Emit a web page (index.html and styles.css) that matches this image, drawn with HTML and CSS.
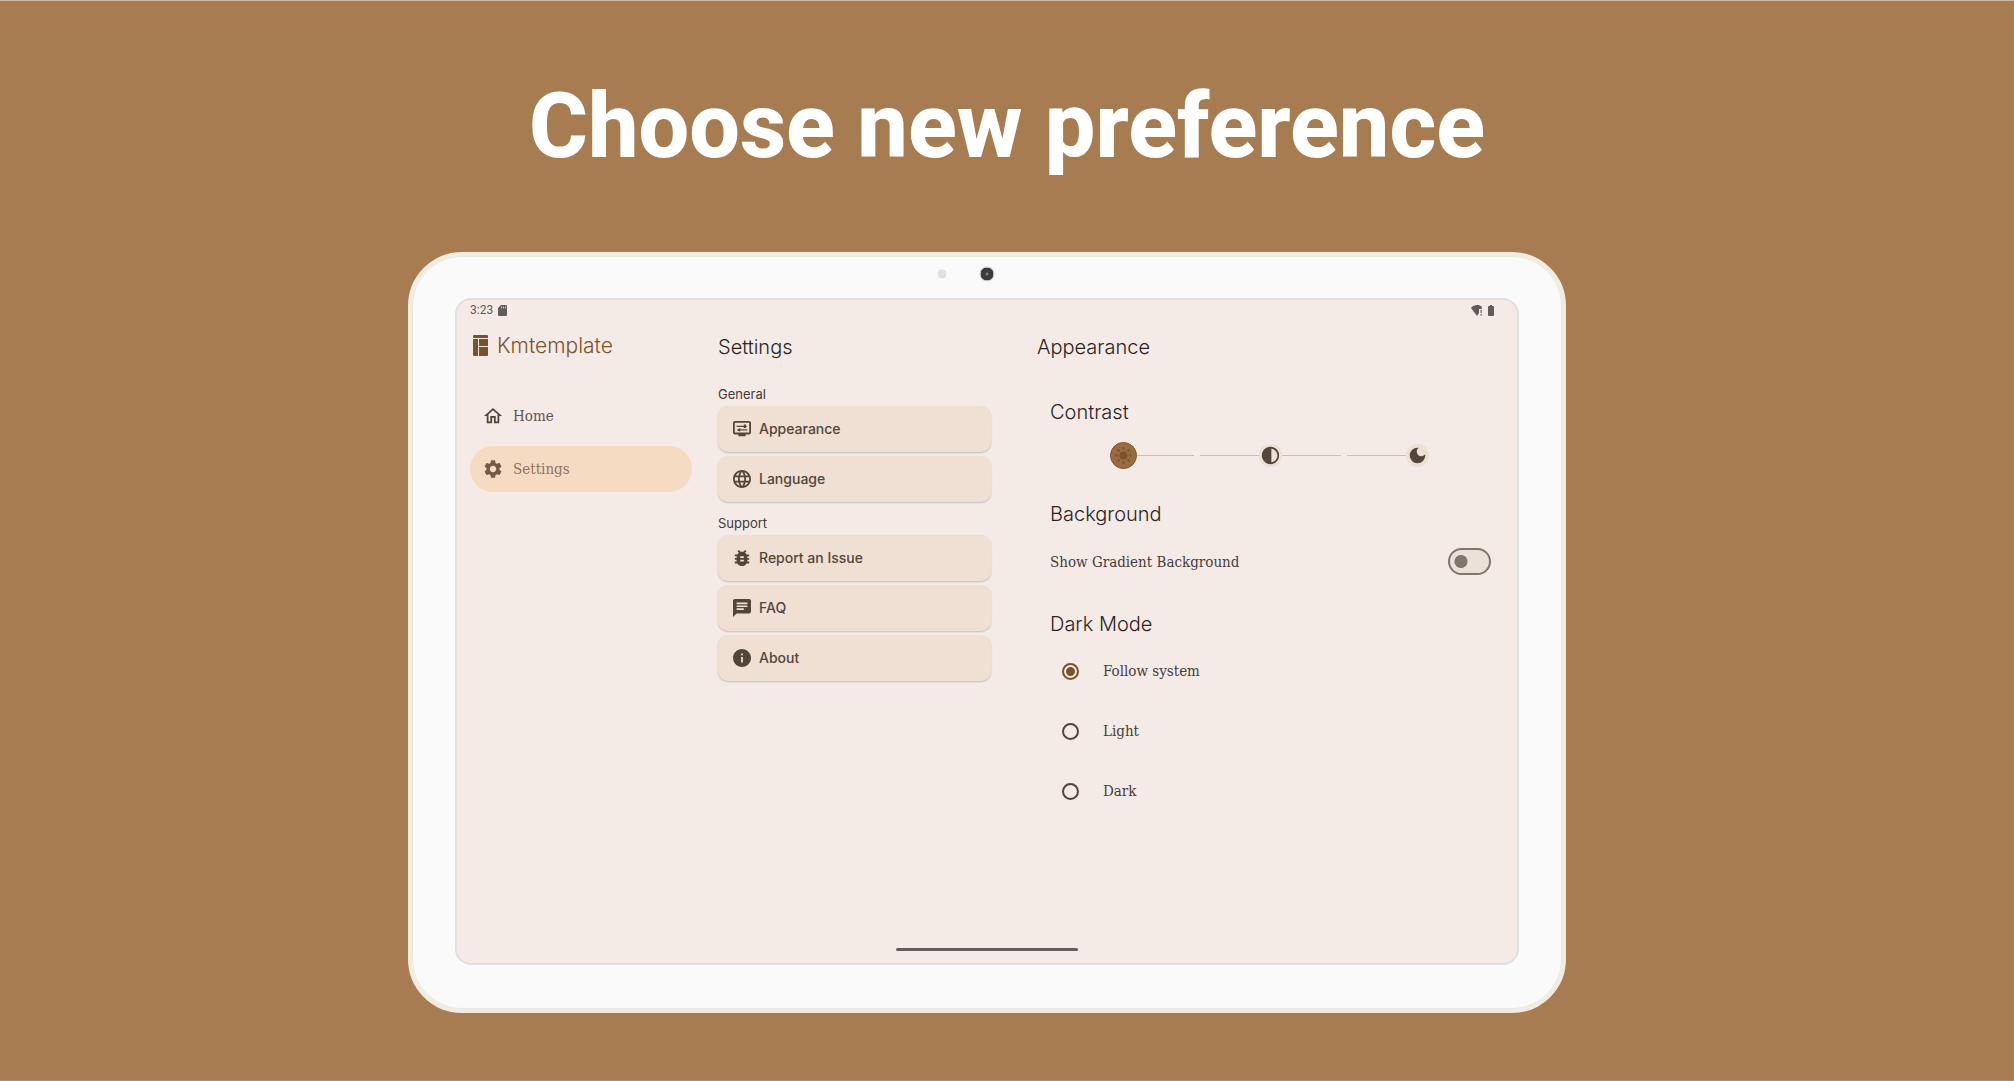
FILE: index.html
```html
<!DOCTYPE html>
<html lang="en">
<head>
<meta charset="utf-8">
<meta name="viewport" content="width=device-width, initial-scale=1">
<title>Choose new preference</title>
<link rel="stylesheet" href="styles.css">
</head>
<body>
<main class="promo">
  <h1 class="headline">Choose new preference</h1>
  <div class="tablet">
    <div class="bezel"><span class="sensor"></span><span class="camera"></span></div>
    <div class="screen">
      <div class="status">
        <span>3:23</span>
        <svg class="sd" viewBox="0 0 9 11"><path d="M3 0h5a1 1 0 0 1 1 1v9a1 1 0 0 1-1 1H1a1 1 0 0 1-1-1V3z"/><path class="slot" d="M3 1.500h1v2H3zM5 1.500h1v2H5zM7 1.500h1v2H7z"/></svg>
        <svg class="wifi" viewBox="0 0 12 11"><path d="M6 0c2 0 3.500.6 4.800 1.700V4H8v4L6 11 0 3C1.800.8 4 0 6 0z"/><path d="M9.500 5h1.200v3H9.500zM9.500 9h1.200v1.500H9.500z"/></svg>
        <svg class="battery" viewBox="0 0 6 11"><path d="M2 0h2v1h1a1 1 0 0 1 1 1v8a1 1 0 0 1-1 1H1a1 1 0 0 1-1-1V2a1 1 0 0 1 1-1h1z"/></svg>
      </div>
      <div class="panes">
        <nav class="drawer" aria-label="Main">
          <div class="brand">
            <svg viewBox="0 0 15 21"><path d="M1 0h13a1 1 0 0 1 1 1v2H0V1a1 1 0 0 1 1-1zM0 4h5v17H1a1 1 0 0 1-1-1zM6 4h9v7H6zM6 12h9v8a1 1 0 0 1-1 1H6z"/></svg>
            <span>Kmtemplate</span>
          </div>
          <a class="nav-item" href="#home">
            <svg class="icon" viewBox="2 2 20 20"><path d="M12 5.690l5 4.500V18h-2v-6H9v6H7v-7.810l5-4.500M12 3L2 12h3v8h6v-6h2v6h6v-8h3L12 3z"/></svg>Home</a>
          <a class="nav-item current" href="#settings" aria-current="page">
            <svg class="icon" viewBox="2 2 20 20"><path d="M19.140 12.940c.04-.3.06-.61.06-.94 0-.32-.02-.64-.07-.94l2.030-1.580c.18-.14.23-.41.12-.61l-1.920-3.320c-.12-.22-.37-.29-.59-.22l-2.390.96c-.5-.38-1.030-.7-1.620-.94l-.36-2.540c-.04-.24-.24-.41-.48-.41h-3.840c-.24 0-.43.17-.47.41l-.36 2.540c-.59.24-1.130.57-1.620.94l-2.390-.96c-.22-.08-.47 0-.59.22L2.740 8.870c-.12.21-.08.47.12.61l2.030 1.580c-.05.3-.09.63-.09.94s.02.64.07.94l-2.030 1.580c-.18.14-.23.41-.12.61l1.920 3.320c.12.22.37.29.59.22l2.390-.96c.5.38 1.030.7 1.620.94l.36 2.540c.05.24.24.41.48.41h3.840c.24 0 .44-.17.47-.41l.36-2.540c.59-.24 1.130-.56 1.620-.94l2.390.96c.22.08.47 0 .59-.22l1.920-3.320c.12-.22.07-.47-.12-.61l-2.010-1.580zM12 15.600c-1.980 0-3.600-1.620-3.600-3.600s1.620-3.600 3.600-3.600 3.600 1.620 3.600 3.600-1.620 3.600-3.600 3.600z"/></svg>Settings</a>
        </nav>
        <section class="list">
          <h2>Settings</h2>
          <div class="group">
            <h3>General</h3>
            <button class="card" type="button"><svg class="icon" viewBox="2 2 20 20"><path d="M20 3H4c-1.100 0-2 .9-2 2v11c0 1.100.9 2 2 2h4v2h8v-2h4c1.100 0 2-.9 2-2V5c0-1.100-.9-2-2-2zm0 13H4V5h16v11zM6 8.250h8v1.500H6zM16.500 9.750L18 9l-1.500-.75V7L14 7v4h2.500zM10 12.250h8v1.500h-8zM10 15v-4l-4 2z"/></svg>Appearance</button>
            <button class="card" type="button"><svg class="icon" viewBox="2 2 20 20"><path d="M11.990 2C6.470 2 2 6.480 2 12s4.470 10 9.990 10C17.520 22 22 17.520 22 12S17.520 2 11.990 2zm6.930 6h-2.950c-.32-1.250-.78-2.450-1.380-3.560 1.840.63 3.370 1.910 4.330 3.560zM12 4.040c.83 1.200 1.480 2.530 1.910 3.960h-3.820c.43-1.430 1.080-2.760 1.910-3.960zM4.260 14C4.100 13.360 4 12.690 4 12s.1-1.360.26-2h3.380c-.08.66-.14 1.320-.14 2s.06 1.340.14 2H4.260zm.82 2h2.950c.32 1.250.78 2.450 1.380 3.560-1.840-.63-3.370-1.900-4.330-3.560zm2.950-8H5.080c.96-1.660 2.490-2.930 4.330-3.560C8.810 5.550 8.350 6.750 8.030 8zM12 19.960c-.83-1.200-1.480-2.530-1.910-3.960h3.820c-.43 1.430-1.080 2.760-1.910 3.960zM14.340 14H9.660c-.09-.66-.16-1.320-.16-2s.07-1.350.16-2h4.680c.09.65.16 1.320.16 2s-.07 1.340-.16 2zm.25 5.560c.6-1.110 1.060-2.310 1.380-3.560h2.950c-.96 1.650-2.490 2.930-4.330 3.560zM16.360 14c.08-.66.14-1.320.14-2s-.06-1.340-.14-2h3.380c.16.64.26 1.310.26 2s-.1 1.360-.26 2h-3.380z"/></svg>Language</button>
          </div>
          <div class="group">
            <h3>Support</h3>
            <button class="card" type="button"><svg class="icon" viewBox="2 2 20 20"><path d="M20 8h-2.810c-.45-.78-1.070-1.450-1.820-1.960L17 4.410 15.590 3l-2.170 2.170C12.960 5.060 12.490 5 12 5s-.96.06-1.410.17L8.410 3 7 4.410l1.620 1.630C7.880 6.550 7.260 7.220 6.810 8H4v2h2.090c-.05.33-.09.66-.09 1v1H4v2h2v1c0 .34.04.67.09 1H4v2h2.810c1.040 1.790 2.970 3 5.190 3s4.150-1.210 5.190-3H20v-2h-2.090c.05-.33.09-.66.09-1v-1h2v-2h-2v-1c0-.34-.04-.67-.09-1H20V8zm-6 8h-4v-2h4v2zm0-4h-4v-2h4v2z"/></svg>Report an Issue</button>
            <button class="card" type="button"><svg class="icon" viewBox="2 2 20 20"><path d="M20 2H4c-1.100 0-2 .9-2 2v18l4-4h14c1.100 0 2-.9 2-2V4c0-1.100-.9-2-2-2zM6 6h12v1.700H6zm0 3.200h12v1.700H6zm8 4.900H6v-1.700h8z"/></svg>FAQ</button>
            <button class="card" type="button"><svg class="icon" viewBox="2 2 20 20"><path d="M12 2C6.480 2 2 6.480 2 12s4.480 10 10 10 10-4.480 10-10S17.520 2 12 2zm1 15h-2v-6h2v6zm0-8h-2V7h2v2z"/></svg>About</button>
          </div>
        </section>
        <section class="detail">
          <h2>Appearance</h2>
          <div class="options">
            <h3>Contrast</h3>
            <div class="contrast">
              <div class="step">
                <span class="track hidden"></span>
                <label class="stop"><input type="radio" name="contrast" aria-label="Standard contrast" checked>
                  <svg viewBox="0 0 20 20"><circle cx="10" cy="10" r="4.200"/><path class="rays" d="M10 1v3M10 16v3M1 10h3M16 10h3M3.600 3.600l2.100 2.100M14.300 14.300l2.100 2.100M3.600 16.400l2.100-2.100M14.300 5.700l2.100-2.100"/></svg></label>
                <span class="track"></span>
              </div>
              <div class="step">
                <span class="track"></span>
                <label class="stop"><input type="radio" name="contrast" aria-label="Medium contrast">
                  <svg viewBox="1 1 22 22"><path d="M12 22c5.520 0 10-4.480 10-10S17.520 2 12 2 2 6.480 2 12s4.480 10 10 10zm1-17.930c3.940.49 7 3.850 7 7.930s-3.050 7.440-7 7.930V4.070z"/></svg></label>
                <span class="track"></span>
              </div>
              <div class="step">
                <span class="track"></span>
                <label class="stop"><input type="radio" name="contrast" aria-label="High contrast">
                  <svg viewBox="1 1 22 22"><path d="M12 3a9 9 0 1 0 9 9c0-.46-.04-.92-.1-1.360a5.400 5.400 0 1 1-7.540-7.540C12.920 3.040 12.460 3 12 3z"/></svg></label>
                <span class="track hidden"></span>
              </div>
            </div>
            <h3>Background</h3>
            <label class="switch-row">Show Gradient Background<input class="switch" type="checkbox" role="switch"></label>
            <h3>Dark Mode</h3>
            <div class="modes">
              <label><input type="radio" name="mode" checked>Follow system</label>
              <label><input type="radio" name="mode">Light</label>
              <label><input type="radio" name="mode">Dark</label>
            </div>
          </div>
        </section>
      </div>
      <div class="home-bar"></div>
    </div>
  </div>
</main>
</body>
</html>
```
FILE: styles.css
```css
* { box-sizing: border-box; }

body {
  margin: 0;
  background: #a67c50;
  font-family: Inter, "Open Sans", sans-serif;
  color: #2b2423;
}

h1, h2, h3 { margin: 0; font-weight: 400; }
svg { display: block; fill: currentColor; flex: none; }
input { appearance: none; margin: 0; flex: none; }

.promo {
  min-height: 100vh;
  display: flex;
  flex-direction: column;
  align-items: center;
  padding: 72px 24px 67px;
  border-top: 1px solid #cfb9a2;
  border-bottom: 1px solid #b28d67;
}

.headline {
  font: 800 90px/108px Roboto, sans-serif;
  color: #fff;
  text-align: center;
}

.tablet {
  width: 100%;
  max-width: 1158px;
  margin: 71px 40px 0 0;
  padding: 0 43px 44px;
  background: #fafafa;
  border: 4px solid #f1ebe0;
  border-radius: 54px;
  box-shadow: inset 0 0 0 1px #eae7de;
}

.bezel {
  height: 42px;
  position: relative;
}

.sensor, .camera {
  position: absolute;
  border-radius: 50%;
  top: 18px;
  left: 50%;
  transform: translate(-50%, -50%);
}

.sensor { width: 9px; height: 9px; margin-left: -45px; background: #e1e1e1; }
.camera {
  width: 15px;
  height: 15px;
  background: radial-gradient(circle, #77777c 0 1px, #3c3b3b 2px);
  border: 1px solid #cfcfcf;
}

.screen {
  display: flex;
  flex-direction: column;
  aspect-ratio: 1064 / 667;
  background: #f5ebe6;
  border: 2px solid #dfe0df;
  border-radius: 16px;
}

.status {
  display: flex;
  align-items: center;
  gap: 5px;
  height: 20px;
  padding: 0 23px 0 13px;
  font: 400 12px/20px Roboto, sans-serif;
  color: #5f5c5a;
}

.sd { width: 9px; height: 11px; }
.slot { fill: #c9c2be; }
.wifi { width: 12px; height: 11px; margin-left: auto; }
.battery { width: 6px; height: 11px; }

.panes {
  flex: 1;
  display: grid;
  grid-template-columns: 222fr 273fr 474fr;
  column-gap: 26px;
  padding: 12px 26px 0 13px;
}

.brand {
  display: flex;
  align-items: center;
  gap: 9px;
  height: 26px;
  margin-bottom: 35px;
  padding-left: 3px;
  font-size: 21px;
  font-weight: 300;
  color: #7a532b;
}
.brand svg { width: 15px; height: 21px; }

.nav-item {
  display: flex;
  align-items: center;
  gap: 11px;
  height: 46px;
  margin-bottom: 7px;
  padding-left: 14px;
  border-radius: 23px;
  font: 15px/20px "DejaVu Serif Condensed", "DejaVu Serif", serif;
  color: #5f544e;
  text-decoration: none;
}
.nav-item.current { background: #f5dbc2; color: #8f735d; }
.nav-item .icon { color: #52463a; }
.nav-item.current .icon { color: #745b49; }

.icon { width: 18px; height: 18px; }

h2, .options h3 { font-size: 20px; line-height: 30px; font-weight: 300; }

.list h2 { margin-bottom: 24px; }
.group { display: flex; flex-direction: column; gap: 4px; margin-bottom: 13px; }
.group h3 { font-size: 13px; line-height: 16px; color: #403836; }

.card {
  display: flex;
  align-items: center;
  gap: 8px;
  height: 46px;
  padding: 0 15px;
  border: 0;
  border-radius: 10px;
  background: #f0dfd3;
  box-shadow: 0 1px 2px #00000033;
  font: 500 14px/20px Inter, sans-serif;
  color: #52463a;
}

.detail { padding-left: 20px; }
.detail h2 { margin-bottom: 35px; }
.options { padding-left: 13px; }

.contrast {
  display: grid;
  grid-template-columns: repeat(3, 1fr);
  margin: 15px 0 30px;
}
.step { display: flex; align-items: center; height: 27px; padding: 0 3px; }
.track { flex: 1; height: 1px; background: #cfc0b2; }
.track.hidden { visibility: hidden; }
.stop { display: grid; place-items: center; color: #52463a; }
.stop > * { grid-area: 1 / 1; }
.stop input { width: 23px; height: 23px; border-radius: 50%; background: #f0dfd3; }
.stop svg { width: 19px; height: 19px; pointer-events: none; }
.stop input:checked { width: 27px; height: 27px; background: #996d41; border: 1px solid #7a532b; }
.stop input:checked + svg { color: #7a532b; }
.rays { stroke: currentColor; stroke-width: 2; }

.switch-row {
  display: flex;
  align-items: center;
  justify-content: space-between;
  margin: 19px 0 34px;
  font: 15px/20px "DejaVu Serif Condensed", "DejaVu Serif", serif;
  color: #453c3a;
}
.switch {
  width: 43px;
  height: 27px;
  border: 2px solid #82756a;
  border-radius: 14px;
  background: radial-gradient(circle at 11px 50%, #82756a 6px, #eae1db 7px);
}
.switch:checked { background: radial-gradient(circle at 28px 50%, #fff 6px, #7a532b 7px); }

.modes {
  display: grid;
  gap: 36px;
  margin-top: 20px;
  padding-left: 12px;
  font: 15px/24px "DejaVu Serif Condensed", "DejaVu Serif", serif;
  color: #453c3a;
}
.modes label { display: flex; align-items: center; gap: 24px; }
.modes input { width: 17px; height: 17px; border: 2px solid #52463a; border-radius: 50%; }
.modes input:checked { border-color: #7a532b; background: radial-gradient(circle, #7a532b 4px, transparent 5px); }

.home-bar {
  width: 182px;
  height: 3px;
  margin: 0 auto 12px;
  border-radius: 2px;
  background: #615e5b;
}
```
